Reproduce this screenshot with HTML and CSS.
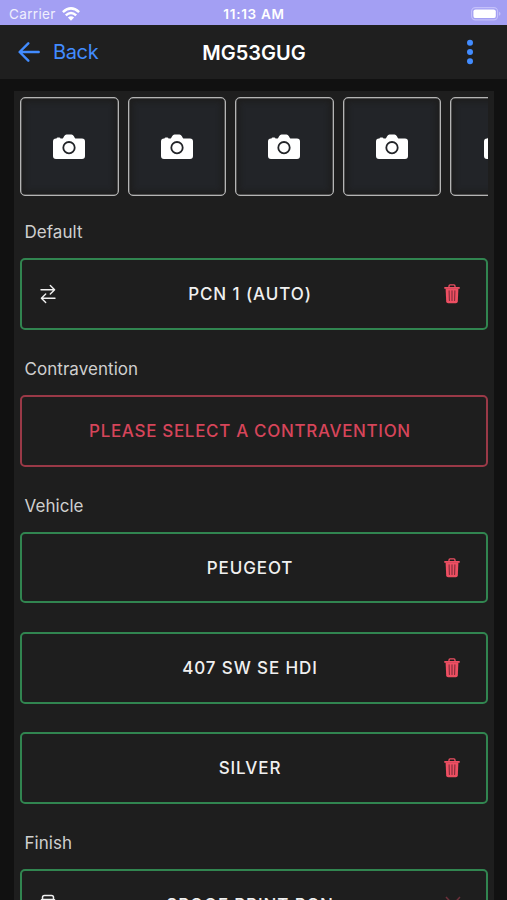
FILE: index.html
```html
<!DOCTYPE html>
<html lang="en">
<head>
<meta charset="utf-8">
<title>MG53GUG</title>
<link rel="stylesheet" href="styles.css">
</head>
<body>
<svg class="defs" aria-hidden="true">
  <symbol id="camera" viewBox="0 0 32 26">
    <path fill="currentColor" d="M3.500 4.600Q3.700 3.500 4.700 3.500h1.600q1 0 1.200 1.100h1.300q1 0 1.500-.9l.8-1.500Q12 .5 13.500.5h5q1.500 0 2.400 1.700l.8 1.500q.5.900 1.500.9H29q3 0 3 3V22q0 3-3 3H3q-3 0-3-3V7.600q0-3 3-3z"/>
    <circle cx="16" cy="13.700" r="5.700" fill="none" stroke="#222428" stroke-width="1.800"/>
  </symbol>
  <symbol id="trash" viewBox="0 0 16 20">
    <path d="M5 3.300V2q0-1.100 1.100-1.100h3.800Q11 .9 11 2v1.300" fill="none" stroke="currentColor" stroke-width="1.300"/>
    <path d="M.3 3h15.400v1.800H.3z" fill="currentColor"/>
    <path d="M1.600 4.500h12.800l-.6 13q-.1 1.800-1.900 1.800H4.100q-1.800 0-1.900-1.800z" fill="currentColor"/>
    <path d="M5.100 6.800l.3 9.700M8 6.800v9.700M10.900 6.800l-.3 9.700" fill="none" stroke="#7e2c3a" stroke-width="1.100" stroke-linecap="round"/>
  </symbol>
</svg>

<div class="status">
  <span class="carrier">Carrier
    <svg width="18" height="14" viewBox="0 0 18 14"><g fill="none" stroke="#fff" stroke-width="2.500"><path d="M.9 5.100Q9-2.400 17.100 5.100"/><path d="M3.800 8.400Q9 3.700 14.200 8.400"/></g><path fill="#fff" d="M5.900 10.500Q9 7.900 12.100 10.500L9 13.700z"/></svg>
  </span>
  <span class="time">11:13 AM</span>
  <span class="battery"><svg width="30" height="14" viewBox="0 0 30 14"><rect x=".6" y=".6" width="26" height="12.300" rx="3.800" fill="none" stroke="#c4c0fa" stroke-width="1.100"/><rect x="2.400" y="2.400" width="22.400" height="8.700" rx="2.200" fill="#fff"/><path d="M28 4.700q1.500.6 1.500 2t-1.500 2z" fill="#c4c0fa"/></svg></span>
</div>

<header class="bar">
  <a class="back"><svg width="22" height="20" viewBox="0 0 22 20"><path d="M10.300 1.300L1.600 10l8.700 8.700M2 10h18.700" fill="none" stroke="currentColor" stroke-width="2.400" stroke-linecap="round" stroke-linejoin="round"/></svg>Back</a>
  <h1>MG53GUG</h1>
  <a class="more"><svg width="8" height="26" viewBox="0 0 8 26" fill="currentColor"><circle cx="4" cy="3.700" r="3"/><circle cx="4" cy="13" r="3"/><circle cx="4" cy="22.200" r="3"/></svg></a>
</header>

<main class="panel">
  <div class="photos">
    <div class="photo"><svg><use href="#camera"/></svg></div>
    <div class="photo"><svg><use href="#camera"/></svg></div>
    <div class="photo"><svg><use href="#camera"/></svg></div>
    <div class="photo"><svg><use href="#camera"/></svg></div>
    <div class="photo"><svg><use href="#camera"/></svg></div>
  </div>

  <h2>Default</h2>
  <div class="field">
    <svg class="lead" viewBox="0 0 16 20"><path d="M1 5.800h13.500M10.300 1.500l4.300 4.300-4.300 4.300M15 14.200H1.500M5.700 9.900l-4.300 4.300 4.300 4.300" fill="none" stroke="currentColor" stroke-width="1.400" stroke-linecap="round" stroke-linejoin="round"/></svg>
    <span>PCN 1 (AUTO)</span>
    <svg class="trash"><use href="#trash"/></svg>
  </div>

  <h2>Contravention</h2>
  <div class="field danger"><span>PLEASE SELECT A CONTRAVENTION</span></div>

  <h2>Vehicle</h2>
  <div class="field"><span>PEUGEOT</span><svg class="trash"><use href="#trash"/></svg></div>
  <div class="field next"><span>407 SW SE HDI</span><svg class="trash"><use href="#trash"/></svg></div>
  <div class="field next"><span>SILVER</span><svg class="trash"><use href="#trash"/></svg></div>

  <h2>Finish</h2>
  <div class="field">
    <svg class="lead" viewBox="0 0 16 20"><path d="M2.500 5.500V3.500q0-2 2-2h7q2 0 2 2v2M3.500 14H1V7.500Q1 5.500 2.500 5.500h11Q15 5.500 15 7.500V14h-2.500M3.500 11h9v7h-9z" fill="none" stroke="currentColor" stroke-width="1.500"/></svg>
    <span>SPOOF PRINT PCN</span>
    <svg class="tools" viewBox="0 0 18 20"><path d="M2 2l14 15M16 2L2 17" fill="none" stroke="currentColor" stroke-width="1.500"/></svg>
  </div>
</main>
</body>
</html>
```

FILE: styles.css
```css
* { box-sizing: border-box; }

body {
  margin: 0;
  height: 900px;
  display: flex;
  flex-direction: column;
  overflow: hidden;
  background: #111;
  color: #fff;
  font-family: Inter, "Liberation Sans", sans-serif;
}

svg { display: block; flex: none; }
.defs { display: none; }

.status {
  flex: none;
  height: 25px;
  display: grid;
  grid-template-columns: 1fr auto 1fr;
  align-items: center;
  padding: 2px 6px 0 9px;
  background: #a39ff3;
  font-size: 13.5px;
}
.carrier { display: flex; align-items: center; gap: 6px; color: #f0effd; letter-spacing: .35px; }
.time { margin-right: 2px; font-weight: 600; font-size: 13.5px; letter-spacing: .7px; }
.battery { justify-self: end; }

.bar {
  flex: none;
  height: 54px;
  display: grid;
  grid-template-columns: 1fr auto 1fr;
  align-items: center;
  padding: 0 33px 0 18px;
  background: #1f1f1f;
}
.back { display: flex; align-items: center; gap: 13px; font-size: 20px; letter-spacing: -.35px; }
.back, .more { color: #428cff; }
.more { justify-self: end; }
h1 { margin: 1px 0 0 16px; font-size: 20px; font-weight: 600; line-height: 24px; letter-spacing: 0; }

.panel {
  flex: 1;
  min-height: 0;
  overflow: hidden;
  width: 480px;
  margin: 12px 0 0 14px;
  padding: 6px 6px 0;
  background: #1e1e1e;
}
.photos { display: flex; gap: 9px; width: 468px; overflow: hidden; }
.photo {
  flex: none;
  width: 98.600px;
  height: 98.600px;
  display: flex;
  align-items: center;
  justify-content: center;
  border: 1px solid #b4b4b4;
  border-radius: 5px;
  background: #222428;
  box-shadow: inset 0 0 0 .5px #808080, inset 0 0 5px 4px #1e1e1e;
}
.photo svg { width: 32px; height: 26px; margin: 1px 0 0; }

h2 {
  margin: 26.500px 0 15px 4.500px;
  font-size: 17px;
  font-weight: 400;
  line-height: 21.200px;
  letter-spacing: .05px;
  color: #cfcfcf;
}
.field {
  height: 71.600px;
  display: grid;
  grid-template-columns: 30px 1fr 30px;
  align-items: center;
  padding: 0 12px 0 18px;
  border: 2px solid #318550;
  border-radius: 5px;
  font-size: 17px;
  font-weight: 500;
  color: #f0f0f0;
}
.field + h2 { margin-top: 29px; }
.field span { grid-column: 2; grid-row: 1; justify-self: center; margin: 0 14px 0 0; letter-spacing: .9px; white-space: nowrap; }
.lead { width: 16px; height: 20px; margin-bottom: 1px; grid-column: 1; grid-row: 1; }
.trash { width: 16px; height: 20px; margin-bottom: 0; grid-column: 3; color: #ed4f62; justify-self: start; }
.tools { width: 18px; height: 20px; grid-column: 3; color: #6c303a; }
.next { margin-top: 28.600px; }
.danger { border-color: #9a3947; color: #d6455a; }
.danger span { letter-spacing: .67px; }
```
